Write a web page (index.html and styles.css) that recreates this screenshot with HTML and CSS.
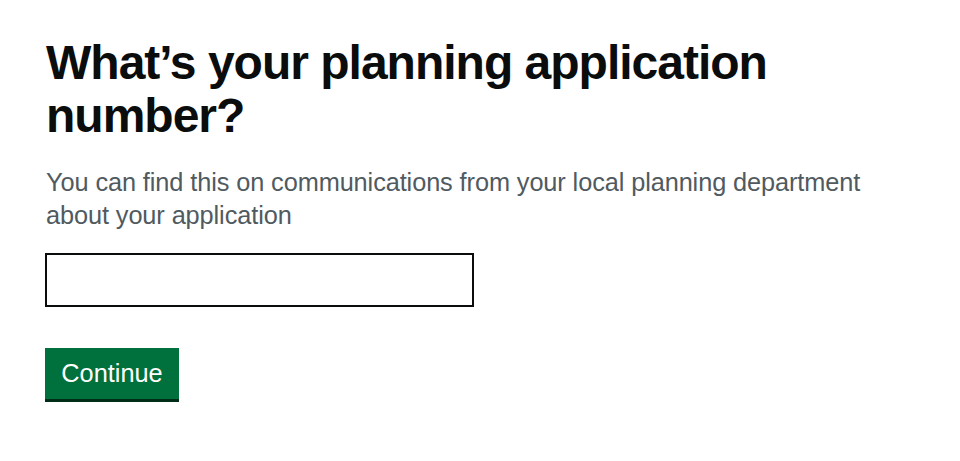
FILE: index.html
```html
<!DOCTYPE html>
<html lang="en">
<head>
<meta charset="utf-8">
<title>What’s your planning application number?</title>
<link rel="stylesheet" href="styles.css">
</head>
<body>
<main class="page">
  <form class="form-group">
    <h1 class="label-wrapper"><label class="label" for="ref">What’s your planning application number?</label></h1>
    <div class="hint">You can find this on communications from your local planning department about your application</div>
    <input class="input" id="ref" type="text">
    <div class="actions"><button class="button" type="button">Continue</button></div>
  </form>
</main>
</body>
</html>
```

FILE: styles.css
```css
html, body {
  margin: 0;
  padding: 0;
  background: #ffffff;
}
body {
  font-family: "Liberation Sans", Arial, sans-serif;
  color: #0b0c0c;
}
.page {
  padding: 36px 0 0 46px;
  width: 870px;
}
.form-group {
  display: flex;
  flex-direction: column;
  align-items: flex-start;
  margin: 0;
}
.label-wrapper {
  margin: 0 0 24px 0;
  font-size: 48px;
  line-height: 53px;
  font-weight: 700;
  letter-spacing: -1px;
}
.label {
  display: block;
}
.hint {
  font-size: 25.33px;
  line-height: 33.33px;
  color: #505a5f;
  margin-bottom: 20px;
  letter-spacing: -0.1px;
}
.input {
  box-sizing: border-box;
  width: 429px;
  height: 54px;
  margin: 0 0 41px -1px;
  padding: 6px;
  border: 2.67px solid #0b0c0c;
  border-radius: 0;
  font-family: inherit;
  font-size: 25.33px;
  background: #fff;
}
.actions {
  margin-left: -1px;
}
.button {
  box-sizing: border-box;
  width: 134px;
  height: 54px;
  margin: 0;
  padding: 1px 0 0 0;
  border: 0;
  border-bottom: 3px solid #002d18;
  border-radius: 0;
  background: #00703c;
  color: #ffffff;
  font-family: inherit;
  font-size: 25.33px;
  line-height: 1;
  cursor: pointer;
}
```
